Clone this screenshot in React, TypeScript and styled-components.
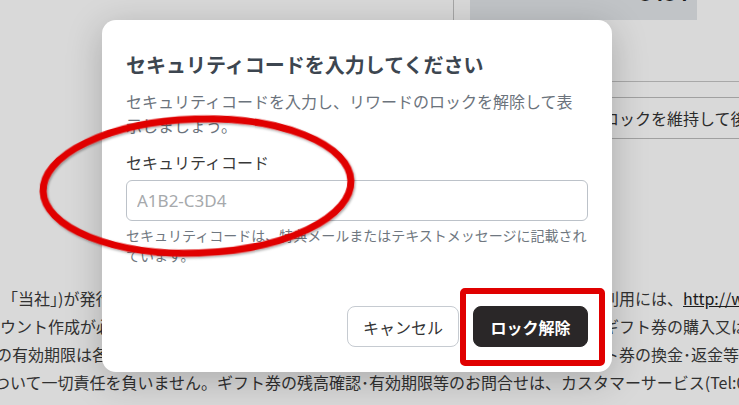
import React from 'react';
import styled, { createGlobalStyle } from 'styled-components';

const GlobalStyle = createGlobalStyle`
  html, body {
    margin: 0;
    padding: 0;
  }
  body {
    font-family: "Noto Sans CJK JP", "Noto Sans", sans-serif;
    background: #ffffff;
    overflow: hidden;
  }
  * {
    box-sizing: border-box;
  }
`;

const Page = styled.div`
  position: relative;
  width: 739px;
  height: 405px;
  overflow: hidden;
  background: #ffffff;
  color: #3c3c3c;
`;

const TopGrid = styled.div`
  display: grid;
  grid-template-columns: 453px 1fr;
`;

const SideColumn = styled.div`
  display: flex;
  flex-direction: column;
`;

const BalanceCard = styled.div`
  height: 82px;
  border-left: 1px solid #c4c4c4;
  border-bottom: 1px solid #c6c6c6;
  padding-left: 16px;
`;

const BalanceBox = styled.div`
  width: 227px;
  height: 20px;
  background: #e3e7ea;
  overflow: hidden;
  display: flex;
  justify-content: flex-end;
  align-items: flex-start;
  padding-right: 9px;
`;

const BalanceDigits = styled.span`
  font-family: "Liberation Sans", Arial, sans-serif;
  font-weight: 700;
  font-size: 22px;
  line-height: 22px;
  margin-top: -17px;
  color: #222;
`;

const KeepBar = styled.div`
  margin-top: 15px;
  width: 600px;
  height: 42px;
  border-top: 1px solid #bcbcbc;
  border-bottom: 1px solid #bcbcbc;
  display: flex;
  align-items: center;
  padding-left: 150px;
  font-size: 16px;
  color: #333;
  white-space: nowrap;
`;

const Terms = styled.div`
  margin-top: 145px;
  font-size: 16px;
  line-height: 28px;
  color: #3a3a3a;
  white-space: nowrap;
`;

const TermsLine = styled.div`
  display: grid;
  grid-template-columns: 603px max-content;
`;

const TermsLead = styled.span<{ $shift?: number }>`
  margin-left: ${(p) => p.$shift ?? 0}px;
`;

const TermsLink = styled.span`
  text-decoration: underline;
  color: #222;
`;

const Overlay = styled.div`
  position: absolute;
  inset: 0;
  background: rgba(0, 0, 0, 0.15);
  padding: 20px 0 0 102px;
`;

const Modal = styled.div`
  width: 510px;
  background: #ffffff;
  border-radius: 14px;
  box-shadow: 0 8px 36px rgba(0, 0, 0, 0.22);
  padding: 31px 24px 25px;
  display: flex;
  flex-direction: column;
`;

const Title = styled.h2`
  margin: 0;
  font-size: 20px;
  line-height: 28px;
  font-weight: 700;
  color: #3d4650;
`;

const Description = styled.p`
  margin: 10px 0 0;
  font-size: 16px;
  line-height: 24px;
  color: #6b737c;
`;

const Label = styled.label`
  margin-top: 13px;
  font-size: 16px;
  line-height: 24px;
  font-weight: 400;
  color: #383838;
`;

const CodeInput = styled.input`
  margin-top: 6px;
  width: 100%;
  height: 41px;
  border: 1px solid #bcc2c9;
  border-radius: 6px;
  padding: 0 10px;
  font-family: "Noto Sans", "Noto Sans CJK JP", sans-serif;
  font-size: 17px;
  color: #333;
  outline: none;
  &::placeholder {
    color: #a6a9ac;
  }
`;

const Help = styled.p`
  margin: 4px 0 0;
  font-size: 14px;
  line-height: 20px;
  color: #6f7780;
`;

const Footer = styled.div`
  margin-top: 41px;
  display: flex;
  justify-content: flex-end;
  gap: 14px;
`;

const Button = styled.button<{ $primary?: boolean }>`
  height: 41px;
  padding: 0 ${(p) => (p.$primary ? 16.5 : 15)}px;
  border-radius: 8px;
  font-family: "Noto Sans CJK JP", "Noto Sans", sans-serif;
  font-size: 16px;
  font-weight: ${(p) => (p.$primary ? 700 : 400)};
  background: ${(p) => (p.$primary ? '#2a2728' : '#ffffff')};
  color: ${(p) => (p.$primary ? '#ffffff' : '#333333')};
  border: 1px solid ${(p) => (p.$primary ? '#2a2728' : '#c6cbd1')};
  cursor: pointer;
`;

const Marks = styled.svg`
  position: absolute;
  inset: 0;
  pointer-events: none;
`;

const App: React.FC = () => {
  return (
    <>
      <GlobalStyle />
      <Page>
        <TopGrid>
          <div />
          <SideColumn>
            <BalanceCard>
              <BalanceBox>
                <BalanceDigits>8484</BalanceDigits>
              </BalanceBox>
            </BalanceCard>
            <KeepBar>ロックを維持して後で表示する</KeepBar>
          </SideColumn>
        </TopGrid>
        <Terms>
          <TermsLine>
            <TermsLead $shift={2}>「当社」)が発行するギフト券</TermsLead>
            <span>
              利用には、<TermsLink>http://www.example.co.jp</TermsLink>
            </span>
          </TermsLine>
          <TermsLine>
            <TermsLead>ウント作成が必要です。</TermsLead>
            <span>ギフト券の購入又はご利用</span>
          </TermsLine>
          <TermsLine>
            <TermsLead $shift={-4}>の有効期限は各ギフト券</TermsLead>
            <span>ト券の換金･返金等はできません</span>
          </TermsLine>
          <TermsLine>
            <TermsLead $shift={-6}>
              ついて一切責任を負いません。ギフト券の残高確認･有効期限等のお問合せは、カスタマーサービス(Tel:0120-000-000)
            </TermsLead>
          </TermsLine>
        </Terms>

        <Overlay>
          <Modal>
            <Title>セキュリティコードを入力してください</Title>
            <Description>
              セキュリティコードを入力し、リワードのロックを解除して表示しましょう。
            </Description>
            <Label htmlFor="code">セキュリティコード</Label>
            <CodeInput id="code" placeholder="A1B2-C3D4" />
            <Help>
              セキュリティコードは、特典メールまたはテキストメッセージに記載されています。
            </Help>
            <Footer>
              <Button>キャンセル</Button>
              <Button $primary>ロック解除</Button>
            </Footer>
          </Modal>
        </Overlay>

        <Marks width="739" height="405" viewBox="0 0 739 405">
          <defs>
            <filter id="soft" x="-10%" y="-10%" width="120%" height="120%">
              <feDropShadow dx="1" dy="1.5" stdDeviation="1.2" floodColor="#000" floodOpacity="0.35" />
            </filter>
          </defs>
          <ellipse
            cx="197"
            cy="186"
            rx="154"
            ry="67"
            transform="rotate(-2 197 186)"
            fill="none"
            stroke="#e00000"
            strokeWidth="7"
            filter="url(#soft)"
          />
          <rect
            x="463"
            y="291"
            width="139"
            height="72"
            rx="2"
            fill="none"
            stroke="#e00000"
            strokeWidth="6"
          />
        </Marks>
      </Page>
    </>
  );
};

export default App;
